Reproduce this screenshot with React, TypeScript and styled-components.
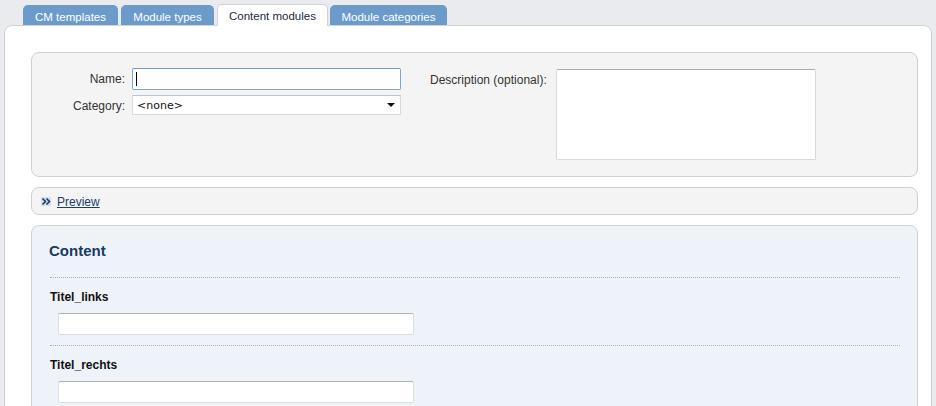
import React from "react";
import styled, { createGlobalStyle } from "styled-components";

const GlobalStyle = createGlobalStyle`
	html, body {
		margin: 0;
		padding: 0;
		background: #e9ebef;
		font-family: "Liberation Sans", Arial, sans-serif;
		color: #222;
	}
`;

const Page = styled.div`
	height: 406px;
	overflow: hidden;
	padding: 5px 4px 0 4px;
	box-sizing: border-box;
`;

const TabBar = styled.div`
	display: flex;
	align-items: flex-end;
	padding-left: 19px;
	height: 20px;
`;

const Tab = styled.div<{ $active?: boolean; $width: number }>`
	width: ${(p) => p.$width}px;
	margin-right: ${(p) => (p.$active ? "2px" : "3px")};
	height: ${(p) => (p.$active ? "22px" : "20px")};
	box-sizing: border-box;
	display: flex;
	align-items: center;
	justify-content: center;
	font-size: 11.5px;
	border-radius: 5px 5px 0 0;
	margin-bottom: ${(p) => (p.$active ? "-1px" : "0")};
	position: relative;
	z-index: ${(p) => (p.$active ? 2 : 0)};
	background: ${(p) => (p.$active ? "#fff" : "#6b9bcb")};
	color: ${(p) => (p.$active ? "#1e2a3a" : "#fff")};
	border: 1px solid ${(p) => (p.$active ? "#cfd2d6" : "#6b9bcb")};
	border-bottom: none;
	padding-top: ${(p) => (p.$active ? "0" : "2px")};
`;

const Panel = styled.div`
	background: #fff;
	border: 1px solid #d0d2d5;
	border-radius: 8px 8px 0 0;
	padding: 26px 13px 0 26px;
	height: 400px;
	box-sizing: border-box;
	display: flex;
	flex-direction: column;
	gap: 10px;
`;

const FormBox = styled.div`
	background: #f4f4f4;
	border: 1px solid #cfcfcf;
	border-radius: 8px;
	height: 125px;
	box-sizing: border-box;
	padding-top: 15px;
	display: flex;
	gap: 29px;
`;

const FieldGrid = styled.div`
	display: grid;
	grid-template-columns: 93px 269px;
	column-gap: 7px;
	row-gap: 5px;
	align-content: start;
`;

const Label = styled.label`
	font-size: 12px;
	color: #333;
	text-align: right;
	padding-top: 4px;
	white-space: nowrap;
`;

const TextBox = styled.div<{ $focused?: boolean; $h?: number; $w?: number }>`
	position: relative;
	height: ${(p) => p.$h ?? 22}px;
	width: ${(p) => (p.$w ? `${p.$w}px` : "auto")};
	box-sizing: border-box;
	background: #fff;
	border: 1px solid ${(p) => (p.$focused ? "#7fa6cc" : "#d7dadd")};
	border-top-color: ${(p) => (p.$focused ? "#6f98c2" : "#a9adb2")};
	border-radius: 2px;
`;

const Caret = styled.span`
	position: absolute;
	left: 3px;
	top: 3px;
	width: 1px;
	height: 14px;
	background: #000;
`;

const Select = styled.div`
	height: 20px;
	box-sizing: border-box;
	background: #fff;
	border: 1px solid #d7dadd;
	border-top-color: #c0c3c7;
	display: flex;
	align-items: center;
	justify-content: space-between;
	padding: 0 5px 0 4px;
	font-family: "DejaVu Sans", Verdana, sans-serif;
	font-size: 11px;
	color: #111;
`;

const Arrow = styled.span`
	width: 0;
	height: 0;
	border-left: 4px solid transparent;
	border-right: 4px solid transparent;
	border-top: 4px solid #111;
`;

const DescGroup = styled.div`
	display: flex;
	gap: 9px;
	align-items: flex-start;
	padding-top: 1px;
`;

const PreviewBar = styled.div`
	background: #f4f4f4;
	border: 1px solid #cfcfcf;
	border-radius: 8px;
	height: 28px;
	box-sizing: border-box;
	display: flex;
	align-items: center;
	gap: 6px;
	padding-left: 9px;
	padding-top: 1px;
`;

const PreviewLink = styled.a`
	color: #1d3d6b;
	font-size: 12px;
	text-decoration: underline;
	cursor: pointer;
`;

const ContentBox = styled.div`
	background: #eef3fa;
	border: 1px solid #cfd2d6;
	border-radius: 8px 8px 0 0;
	flex: 1;
	padding: 14px 17px 0 17px;
`;

const Heading = styled.h2`
	margin: 0;
	font-size: 15px;
	font-weight: bold;
	color: #173b62;
	line-height: 22px;
	padding-bottom: 15px;
`;

const Section = styled.div`
	border-top: 1px dotted #a9adb4;
	margin: 0 0 0 1px;
	padding: 11px 0 10px 0;
`;

const FieldTitle = styled.div`
	font-size: 12px;
	font-weight: bold;
	color: #111;
	line-height: 16px;
	margin-bottom: 8px;
`;

const FieldInput = styled.div`
	margin-left: 8px;
	width: 356px;
	height: 22px;
	box-sizing: border-box;
	background: #fff;
	border: 1px solid #dadde1;
	border-top-color: #aeb2b7;
	border-radius: 2px;
`;

function DoubleChevron() {
	return (
		<svg width="10" height="9" viewBox="0 0 10 9">
			<rect width="10" height="9" fill="#d3e1f2" />
			<path d="M1.5 1.5 L4.5 4.5 L1.5 7.5 M5.5 1.5 L8.5 4.5 L5.5 7.5" fill="none" stroke="#1b3a66" strokeWidth="1.6" />
		</svg>
	);
}

const tabs = [
	{ label: "CM templates", width: 95 },
	{ label: "Module types", width: 93 },
	{ label: "Content modules", width: 111 },
	{ label: "Module categories", width: 117 },
];
const fields = ["Titel_links", "Titel_rechts"];

export default function App() {
	return (
		<>
			<GlobalStyle />
			<Page>
				<TabBar>
					{tabs.map((t) => (
						<Tab key={t.label} $width={t.width} $active={t.label === "Content modules"}>
							{t.label}
						</Tab>
					))}
				</TabBar>
				<Panel>
					<FormBox>
						<FieldGrid>
							<Label>Name:</Label>
							<TextBox $focused>
								<Caret />
							</TextBox>
							<Label>Category:</Label>
							<Select>
								<span>&lt;none&gt;</span>
								<Arrow />
							</Select>
						</FieldGrid>
						<DescGroup>
							<Label>Description (optional):</Label>
							<TextBox $h={91} $w={260} />
						</DescGroup>
					</FormBox>
					<PreviewBar>
						<DoubleChevron />
						<PreviewLink>Preview</PreviewLink>
					</PreviewBar>
					<ContentBox>
						<Heading>Content</Heading>
						{fields.map((f) => (
							<Section key={f}>
								<FieldTitle>{f}</FieldTitle>
								<FieldInput />
							</Section>
						))}
					</ContentBox>
				</Panel>
			</Page>
		</>
	);
}
